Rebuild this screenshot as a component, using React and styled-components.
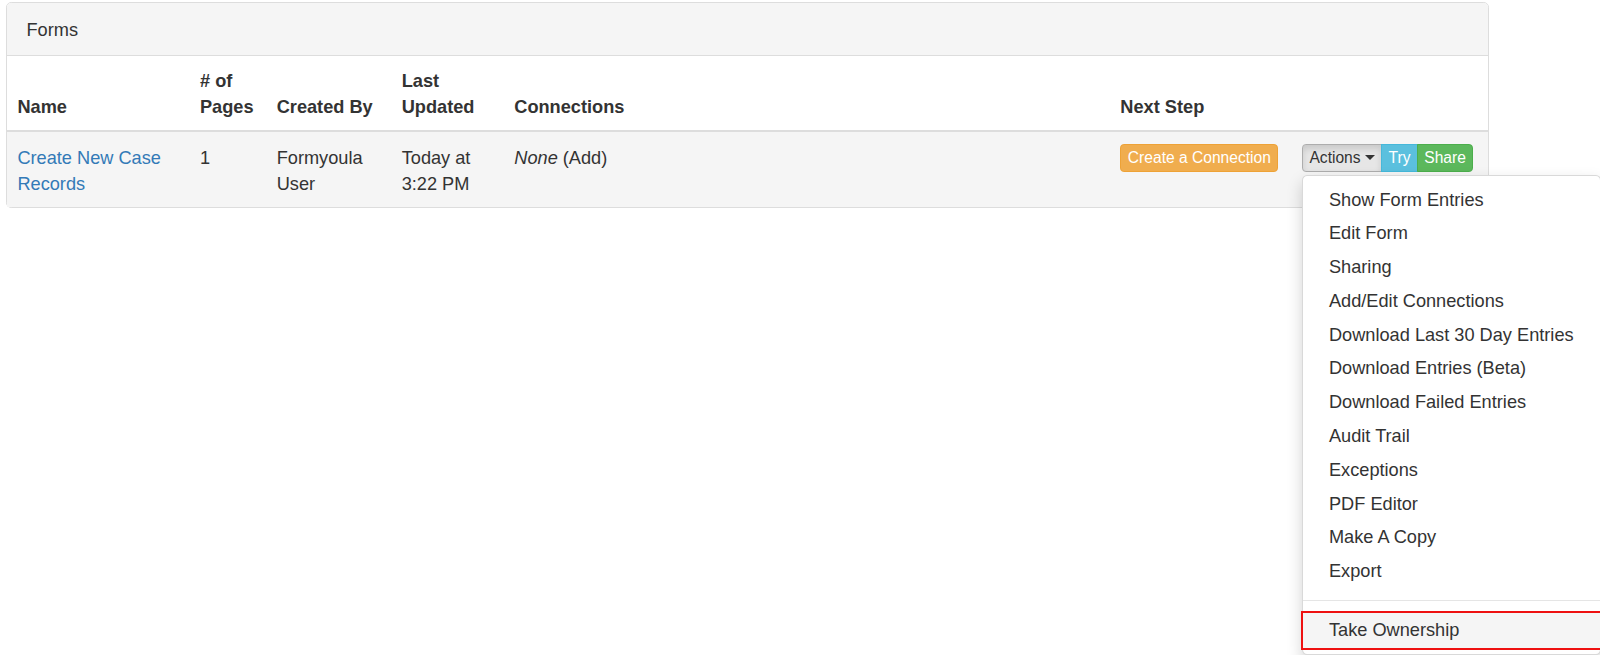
import React from "react";
import styled, { createGlobalStyle } from "styled-components";

const GlobalStyle = createGlobalStyle`
  html, body { margin: 0; padding: 0; background: #fff; }
  html, body, #root { min-height: 100vh; }
  #root { height: 655px; overflow: visible; }
  body {
    font-family: "Liberation Sans", Arial, Helvetica, sans-serif;
    font-size: 18.2px;
    line-height: 26px;
    color: #333;
  }
  * { box-sizing: border-box; }
`;

const Page = styled.div`
  min-height: 655px;
  padding: 2px 0 0 6px;
`;

const Panel = styled.div`
  width: 1483px;
  border: 1.3px solid #ddd;
  border-radius: 5.2px;
  background: #fff;
`;

const Heading = styled.div`
  padding: 13.5px 19.5px 12.5px;
  background: #f5f5f5;
  border-bottom: 1.3px solid #ddd;
  border-radius: 4px 4px 0 0;
  line-height: 26px;
  color: #333;
`;

const Table = styled.table`
  width: 100%;
  border-collapse: collapse;
  table-layout: fixed;
`;

const Th = styled.th`
  text-align: left;
  vertical-align: bottom;
  font-weight: bold;
  padding: 12px 10.4px 9.8px;
  line-height: 26px;
  border-bottom: 2.6px solid #ddd;
`;

const Row = styled.tr`
  background: #f5f5f5;
`;

const Td = styled.td`
  vertical-align: top;
  padding: 13px 10.4px 9.8px;
  line-height: 26px;
`;

const Link = styled.a`
  color: #337ab7;
  text-decoration: none;
`;

const Em = styled.em`
  font-style: italic;
`;

const BtnRow = styled.div`
  display: flex;
  margin-top: -1px;
`;

const Btn = styled.button`
  font-family: inherit;
  font-size: 15.6px;
  line-height: 23.4px;
  padding: 1.3px 6.5px;
  border: 1.3px solid ${(p) => p.$border};
  background: ${(p) => p.$bg};
  color: ${(p) => p.$color || "#fff"};
  border-radius: 3.9px;
  white-space: nowrap;
  cursor: pointer;
  display: inline-flex;
  align-items: center;
`;

const Group = styled.div`
  position: relative;
  display: inline-flex;
  ${Btn} { border-radius: 0; }
  ${Btn} + ${Btn} { margin-left: -1.3px; }
  ${Btn}:first-child { border-radius: 3.9px 0 0 3.9px; }
  ${Btn}:last-of-type { border-radius: 0 3.9px 3.9px 0; }
`;

const ActionsBtn = styled(Btn)`
  box-shadow: inset 0 3.9px 6.5px rgba(0, 0, 0, 0.125);
`;

const Caret = styled.span`
  display: inline-block;
  width: 0;
  height: 0;
  margin-left: 4.3px;
  border-top: 5.2px solid #333;
  border-left: 5.2px solid transparent;
  border-right: 5.2px solid transparent;
`;

const Menu = styled.ul`
  position: absolute;
  top: calc(100% + 3.4px);
  left: 0;
  z-index: 10;
  margin: 0;
  padding: 6.5px 0;
  list-style: none;
  background: #fff;
  border: 1.3px solid rgba(0, 0, 0, 0.15);
  border-radius: 5.2px;
  box-shadow: 0 7.8px 15.6px rgba(0, 0, 0, 0.175);
  white-space: nowrap;
`;

const Item = styled.li`
  display: block;
  padding: ${(p) => (p.$active ? "4.4px 26px 4.4px" : "3.9px 26px")};
  line-height: 26px;
  font-size: 18.2px;
  color: #333;
  background: ${(p) => (p.$active ? "#f5f5f5" : "transparent")};
  outline: ${(p) => (p.$active ? "2.2px solid #ee1111" : "none")};
`;

const Divider = styled.li`
  height: 1.3px;
  margin: 11.7px 0;
  background: #e5e5e5;
`;

const items = [
  "Show Form Entries",
  "Edit Form",
  "Sharing",
  "Add/Edit Connections",
  "Download Last 30 Day Entries",
  "Download Entries (Beta)",
  "Download Failed Entries",
  "Audit Trail",
  "Exceptions",
  "PDF Editor",
  "Make A Copy",
  "Export",
];

export default function App() {
  return (
    <>
      <GlobalStyle />
      <Page>
        <Panel>
          <Heading>Forms</Heading>
          <Table>
            <colgroup>
              <col style={{ width: 182.6 }} />
              <col style={{ width: 76.7 }} />
              <col style={{ width: 125 }} />
              <col style={{ width: 112.6 }} />
              <col style={{ width: 606.1 }} />
              <col style={{ width: 181.6 }} />
              <col />
            </colgroup>
            <thead>
              <tr>
                <Th>Name</Th>
                <Th>
                  # of
                  <br />
                  Pages
                </Th>
                <Th>Created By</Th>
                <Th>
                  Last
                  <br />
                  Updated
                </Th>
                <Th>Connections</Th>
                <Th>Next Step</Th>
                <Th></Th>
              </tr>
            </thead>
            <tbody>
              <Row>
                <Td>
                  <Link href="#">Create New Case Records</Link>
                </Td>
                <Td>1</Td>
                <Td>Formyoula User</Td>
                <Td>Today at 3:22 PM</Td>
                <Td>
                  <Em>None</Em> (Add)
                </Td>
                <Td>
                  <BtnRow>
                    <Btn $bg="#f0ad4e" $border="#eea236">
                      Create a Connection
                    </Btn>
                  </BtnRow>
                </Td>
                <Td>
                  <BtnRow>
                    <Group>
                      <ActionsBtn $bg="#e6e6e6" $border="#adadad" $color="#333">
                        Actions
                        <Caret />
                      </ActionsBtn>
                      <Btn $bg="#5bc0de" $border="#46b8da">
                        Try
                      </Btn>
                      <Btn $bg="#5cb85c" $border="#4cae4c">
                        Share
                      </Btn>
                      <Menu>
                        {items.map((t) => (
                          <Item key={t}>{t}</Item>
                        ))}
                        <Divider />
                        <Item $active>Take Ownership</Item>
                      </Menu>
                    </Group>
                  </BtnRow>
                </Td>
              </Row>
            </tbody>
          </Table>
        </Panel>
      </Page>
    </>
  );
}
